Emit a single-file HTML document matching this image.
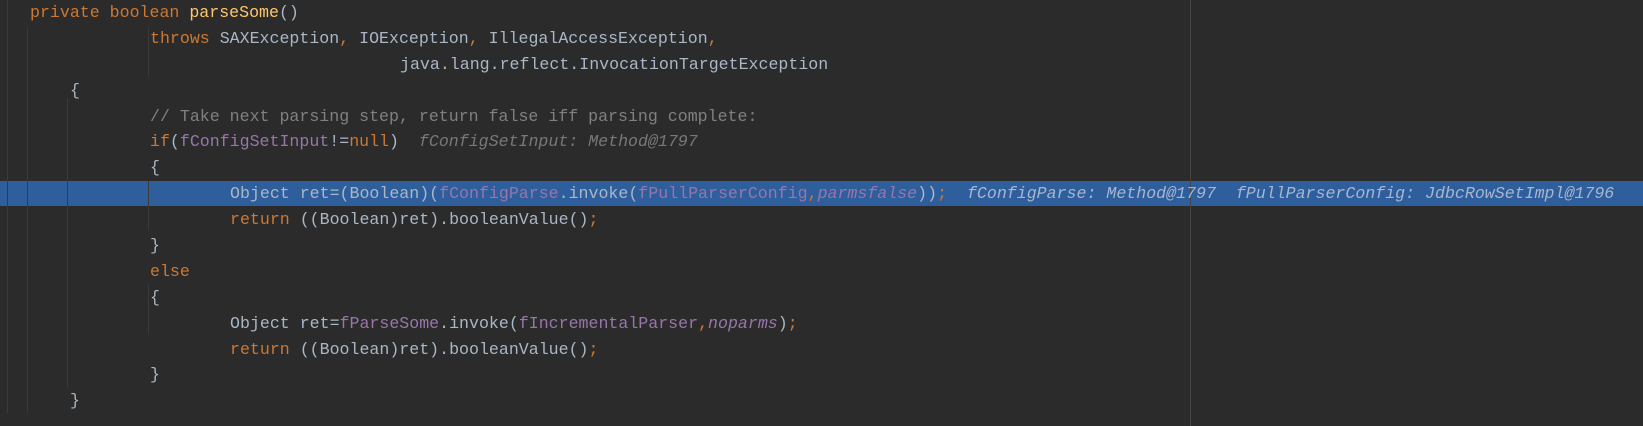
<!DOCTYPE html>
<html><head><meta charset="utf-8"><style>
html,body{margin:0;padding:0;}
body{width:1643px;height:426px;background:#2b2b2b;position:relative;overflow:hidden;font-family:"Liberation Mono",monospace;font-size:16.6px;color:#a9b7c6;}
.l{position:absolute;white-space:pre;height:26px;line-height:26px;}
.k{color:#cc7832}.m{color:#ffc66d}.f{color:#9876aa}.fi{color:#9876aa;font-style:italic}.c{color:#808080}
.h{color:#787878;font-style:italic}
.hl .h{color:#a7b6cc}
.g{position:absolute;width:1px;background:#3a3a3a;}
</style></head><body>
<div style="position:absolute;left:0;top:181px;width:1643px;height:25px;background:#2f5e9d"></div>
<div class="g" style="left:7px;top:0;height:413px"></div>
<div class="g" style="left:27px;top:27px;height:386px"></div>
<div class="g" style="left:67px;top:98px;height:290px"></div>
<div class="g" style="left:148px;top:27px;height:50px"></div>
<div class="g" style="left:148px;top:181px;height:50px"></div>
<div class="g" style="left:148px;top:285px;height:50px"></div>
<div style="position:absolute;left:1190px;top:0;width:1px;height:426px;background:#454545"></div>

<div class="l" style="left:30px;top:0px"><span class="k">private boolean </span><span class="m">parseSome</span>()</div>
<div class="l" style="left:150px;top:26px"><span class="k">throws </span>SAXException<span class="k">, </span>IOException<span class="k">, </span>IllegalAccessException<span class="k">,</span></div>
<div class="l" style="left:400px;top:52px">java.lang.reflect.InvocationTargetException</div>
<div class="l" style="left:70px;top:78px">{</div>
<div class="l c" style="left:150px;top:104px">// Take next parsing step, return false iff parsing complete:</div>
<div class="l" style="left:150px;top:129px"><span class="k">if</span>(<span class="f">fConfigSetInput</span>!=<span class="k">null</span>)  <span class="h">fConfigSetInput: Method@1797</span></div>
<div class="l" style="left:150px;top:155px">{</div>
<div class="l hl" style="left:230px;top:181px">Object ret=(Boolean)(<span class="f">fConfigParse</span>.invoke(<span class="f">fPullParserConfig</span><span class="k">,</span><span class="fi">parmsfalse</span>))<span class="k">;</span>  <span class="h">fConfigParse: Method@1797</span>  <span class="h">fPullParserConfig: JdbcRowSetImpl@1796</span></div>
<div class="l" style="left:230px;top:207px"><span class="k">return </span>((Boolean)ret).booleanValue()<span class="k">;</span></div>
<div class="l" style="left:150px;top:233px">}</div>
<div class="l k" style="left:150px;top:259px">else</div>
<div class="l" style="left:150px;top:285px">{</div>
<div class="l" style="left:230px;top:311px">Object ret=<span class="f">fParseSome</span>.invoke(<span class="f">fIncrementalParser</span><span class="k">,</span><span class="fi">noparms</span>)<span class="k">;</span></div>
<div class="l" style="left:230px;top:337px"><span class="k">return </span>((Boolean)ret).booleanValue()<span class="k">;</span></div>
<div class="l" style="left:150px;top:362px">}</div>
<div class="l" style="left:70px;top:388px">}</div>
</body></html>
